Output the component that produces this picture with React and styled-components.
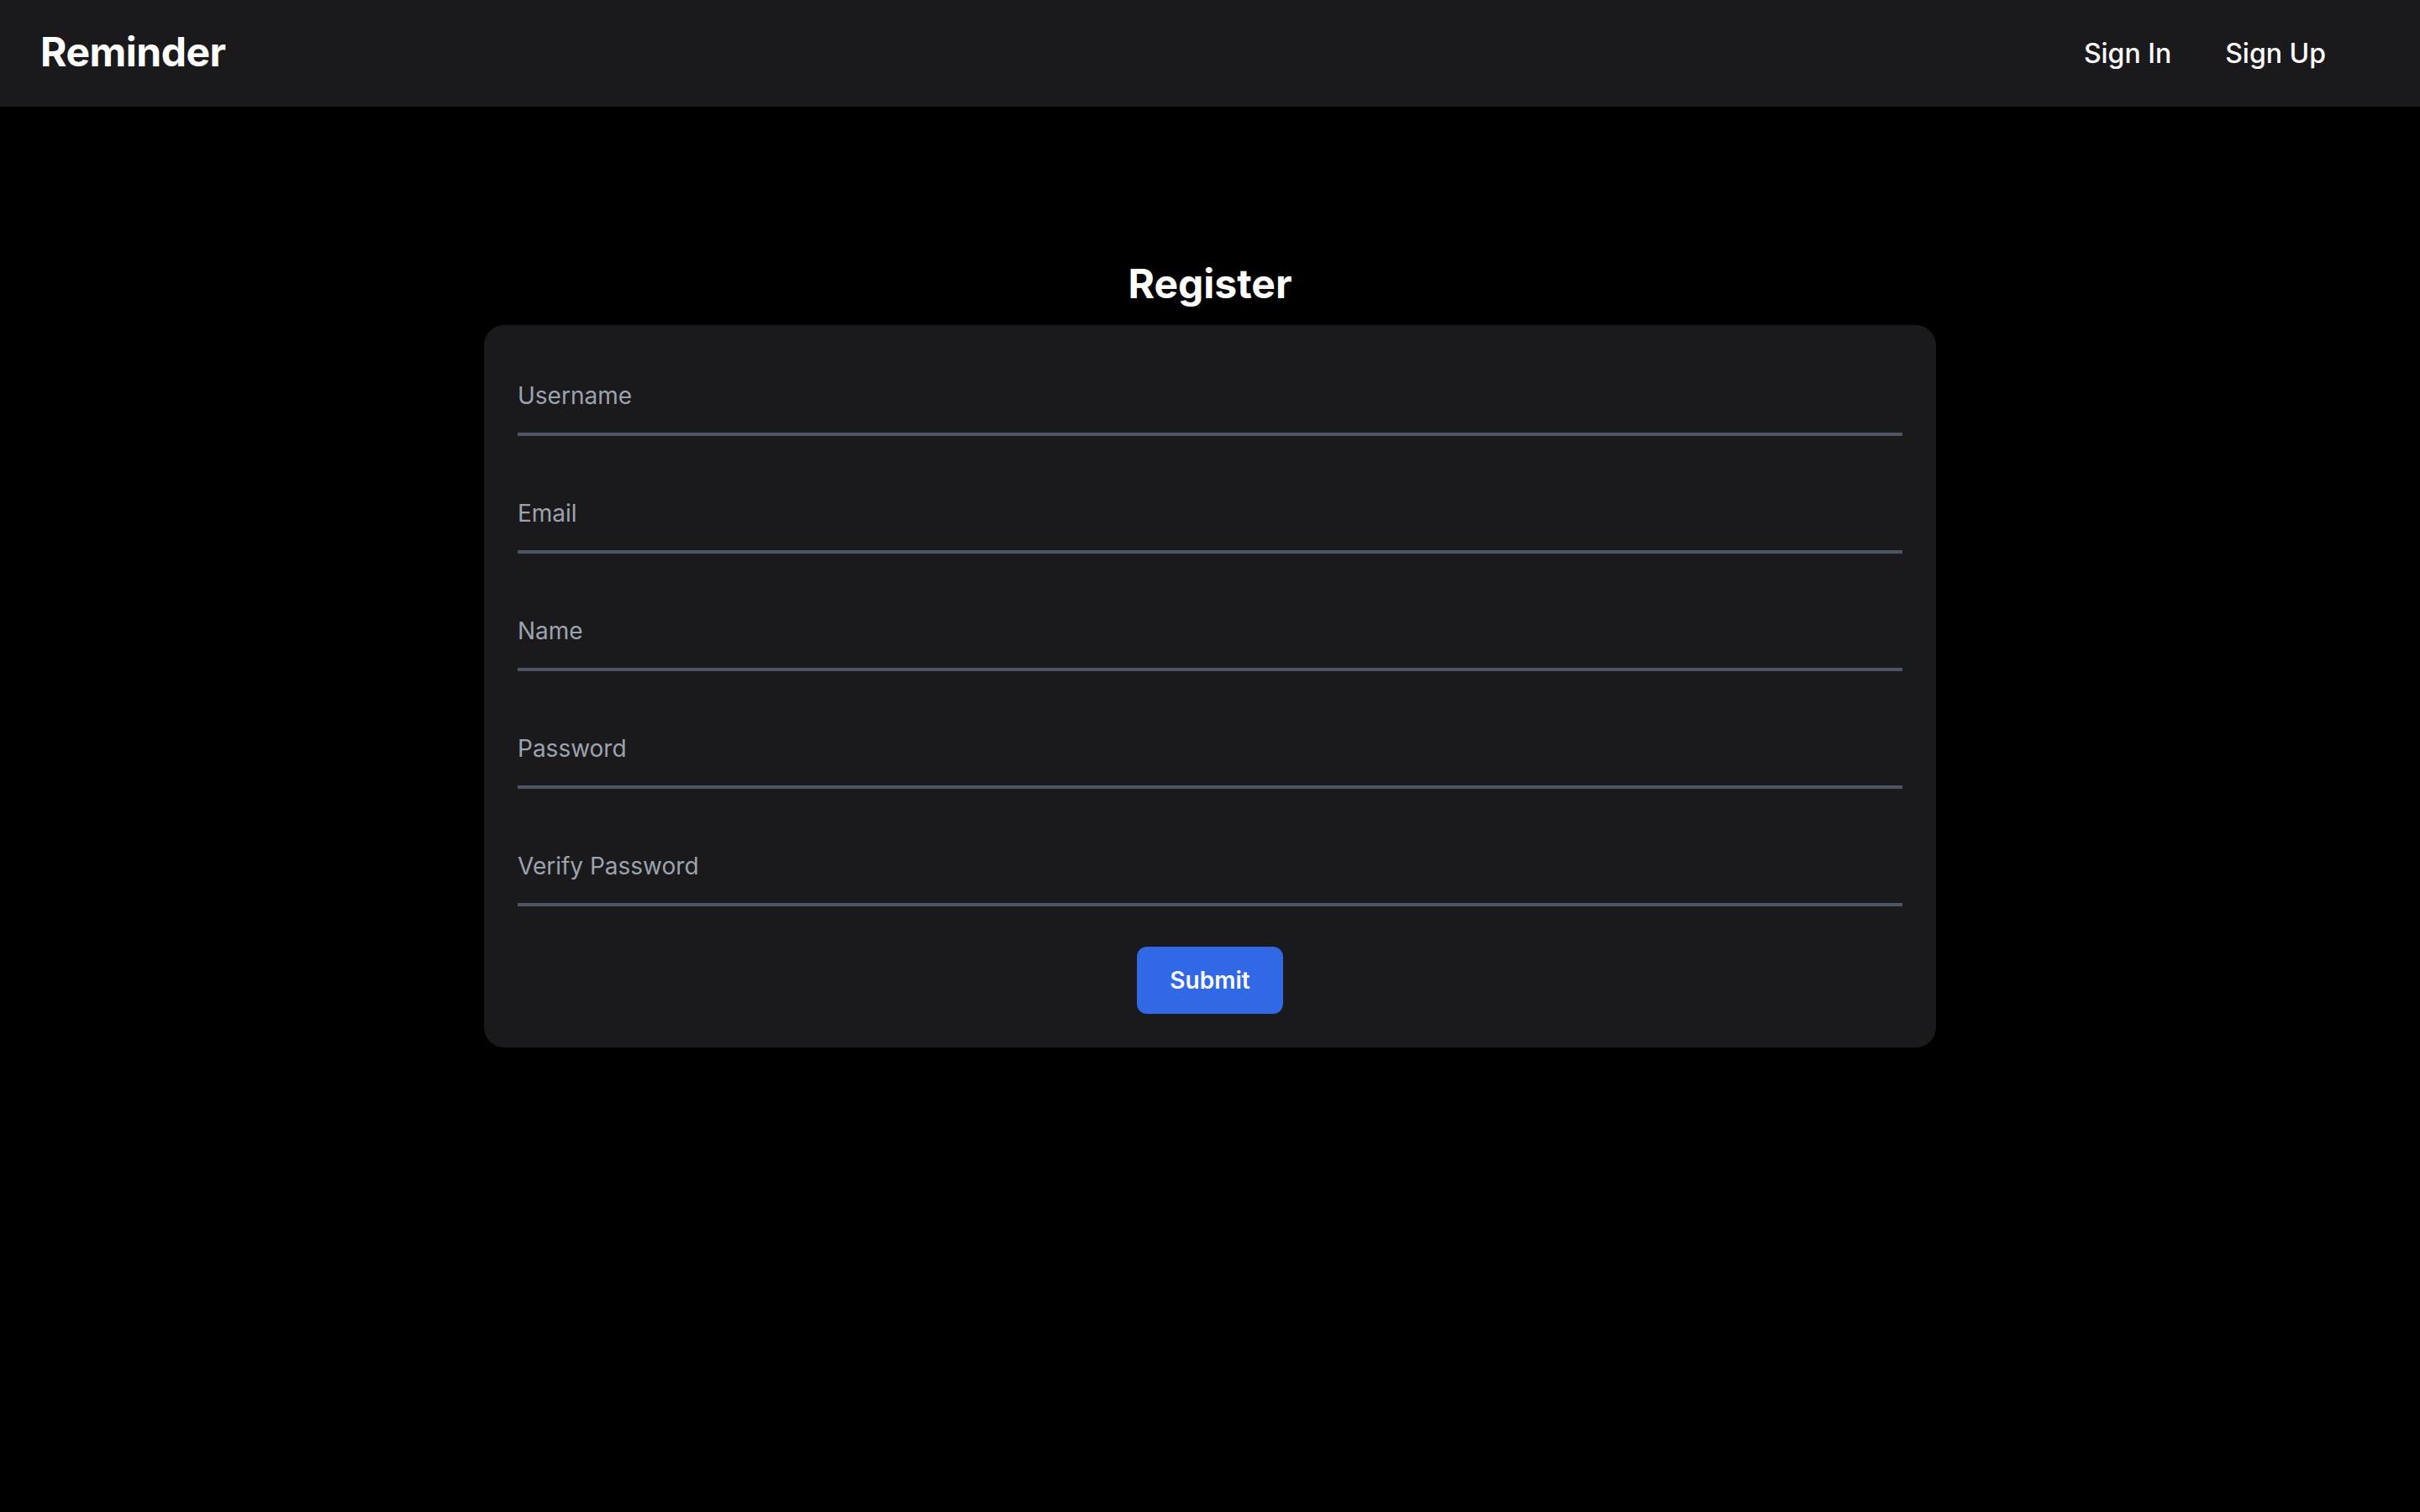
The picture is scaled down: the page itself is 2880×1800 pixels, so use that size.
import React from 'react';
import styled, { createGlobalStyle } from 'styled-components';

const GlobalStyle = createGlobalStyle`
  html, body {
    margin: 0;
    padding: 0;
    background: #000000;
    font-family: Inter, "Noto Sans", "Liberation Sans", sans-serif;
    color: #ffffff;
  }
  * {
    box-sizing: border-box;
  }
`;

const Page = styled.div`
  min-height: 100vh;
  background: #000000;
`;

const Navbar = styled.nav`
  height: 127px;
  background: #1a1a1c;
  display: flex;
  align-items: center;
  justify-content: space-between;
  padding: 0 80px 0 48px;
`;

const Brand = styled.a`
  font-size: 48px;
  font-weight: 700;
  color: #ffffff;
  text-decoration: none;
  letter-spacing: -0.5px;
  margin-top: -4px;
`;

const NavLinks = styled.div`
  display: flex;
  align-items: center;
`;

const NavLink = styled.a`
  font-size: 32px;
  font-weight: 500;
  color: #ffffff;
  text-decoration: none;
  padding: 0 32px;
`;

const Main = styled.main`
  display: flex;
  flex-direction: column;
  align-items: center;
  padding-top: 182px;
`;

const Title = styled.h1`
  margin: 0 0 20px;
  font-size: 48px;
  line-height: 58px;
  font-weight: 700;
  color: #ffffff;
`;

const Card = styled.form`
  width: 1728px;
  background: #1a1a1c;
  border-radius: 24px;
  padding: 40px 40px 40px;
  display: flex;
  flex-direction: column;
  gap: 48px;
`;

const Input = styled.input`
  width: 100%;
  height: 92px;
  background: transparent;
  border: none;
  border-bottom: 4px solid #4b5563;
  outline: none;
  padding: 0;
  font-family: inherit;
  font-size: 28px;
  color: #ffffff;

  &::placeholder {
    color: #9ca3af;
  }
`;

const Actions = styled.div`
  display: flex;
  justify-content: center;
`;

const SubmitButton = styled.button`
  height: 80px;
  padding: 0 39px;
  background: #3068e6;
  border: none;
  border-radius: 12px;
  color: #ffffff;
  font-family: inherit;
  font-size: 28px;
  font-weight: 600;
  cursor: pointer;
`;

const fields = [
  { name: 'username', type: 'text', label: 'Username' },
  { name: 'email', type: 'email', label: 'Email' },
  { name: 'name', type: 'text', label: 'Name' },
  { name: 'password', type: 'password', label: 'Password' },
  { name: 'verifyPassword', type: 'password', label: 'Verify Password' }
];

const App = () => (
  <Page>
    <GlobalStyle />
    <Navbar>
      <Brand href="#">Reminder</Brand>
      <NavLinks>
        <NavLink href="#">Sign In</NavLink>
        <NavLink href="#">Sign Up</NavLink>
      </NavLinks>
    </Navbar>
    <Main>
      <Title>Register</Title>
      <Card onSubmit={(e) => e.preventDefault()}>
        {fields.map((f) => (
          <Input key={f.name} name={f.name} type={f.type} placeholder={f.label} />
        ))}
        <Actions>
          <SubmitButton type="submit">Submit</SubmitButton>
        </Actions>
      </Card>
    </Main>
  </Page>
);

export default App;
